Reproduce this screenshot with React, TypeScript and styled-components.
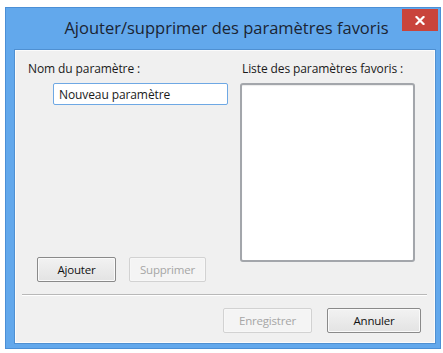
import React from "react";
import styled, { createGlobalStyle } from "styled-components";

const Global = createGlobalStyle`
  html, body { margin: 0; padding: 0; background: #ffffff; }
  body { font-family: "Open Sans", "Liberation Sans", sans-serif; }
  * { box-sizing: border-box; }
`;

const Page = styled.div`
  padding: 7px 0 0 5px;
`;

const Window = styled.div`
  width: 436px;
  height: 342px;
  background: #62a8ec;
  border: 1px solid #4b8fd6;
  display: flex;
  flex-direction: column;
  padding: 0 5px 5px 9px;
`;

const TitleBar = styled.div`
  height: 42px;
  display: flex;
  align-items: flex-start;
`;

const TitleSpacer = styled.div`
  width: 36px;
`;

const Title = styled.div`
  flex: 1;
  text-align: center;
  font-size: 16.5px;
  line-height: 22px;
  margin-top: 9px;
  color: #1b2433;
  white-space: nowrap;
`;

const CloseButton = styled.div`
  width: 36px;
  height: 22px;
  margin-top: 1px;
  margin-right: -3px;
  background: #c9443c;
  display: flex;
  align-items: center;
  justify-content: center;
`;

const Panel = styled.div`
  flex: 1;
  background: #f0f0f0;
  border: 1px solid #fbfbfb;
  box-shadow: 0 0 0 1px #4f90d2;
  padding: 0 7px 0 6px;
  display: flex;
  flex-direction: column;
`;

const Upper = styled.div`
  display: grid;
  grid-template-columns: 200px 175px;
  column-gap: 12px;
  padding: 10px 0 0 6px;
  height: 231px;
`;

const Column = styled.div`
  display: flex;
  flex-direction: column;
`;

const Label = styled.div<{ $indent?: number }>`
  font-size: 12px;
  line-height: 16px;
  color: #1a1a1a;
  letter-spacing: -0.1px;
  white-space: nowrap;
  padding-left: ${(p) => p.$indent ?? 0}px;
`;

const TextInput = styled.input`
  margin: 6px 0 0 25px;
  width: 175px;
  height: 22px;
  border: 1px solid #6ea8e4;
  border-radius: 2px;
  background: #ffffff;
  padding: 0 5px;
  font-family: "Open Sans", "Liberation Sans", sans-serif;
  font-size: 12px;
  color: #1a1a1a;
  letter-spacing: -0.1px;
  outline: none;
`;

const ListBox = styled.div`
  margin-top: 6px;
  width: 175px;
  height: 179px;
  background: #ffffff;
  border: 2px solid #a3a6ab;
  border-radius: 3px;
  box-shadow: inset 0 1px 1px rgba(0, 0, 0, 0.08);
`;

const ButtonRow = styled.div<{ $end?: boolean }>`
  display: flex;
  gap: ${(p) => (p.$end ? 15 : 13)}px;
  justify-content: ${(p) => (p.$end ? "flex-end" : "flex-start")};
  margin-top: auto;
  padding-left: ${(p) => (p.$end ? 0 : 9)}px;
  padding-right: ${(p) => (p.$end ? 6 : 0)}px;
`;

const Button = styled.button<{ $w: number }>`
  width: ${(p) => p.$w}px;
  height: 25px;
  border-radius: 2px;
  font-family: "Open Sans", "Liberation Sans", sans-serif;
  font-size: 11.5px;
  letter-spacing: -0.2px;
  padding: 0;
  border: 1px solid ${(p) => (p.disabled ? "#d2d2d2" : "#8a8a8a")};
  background: ${(p) =>
    p.disabled ? "#f4f4f4" : "linear-gradient(#f2f2f2, #e3e3e3)"};
  color: ${(p) => (p.disabled ? "#a6a6a6" : "#111111")};
  box-shadow: inset 0 0 0 1px ${(p) => (p.disabled ? "#f7f7f7" : "#fafafa")};
`;

const Separator = styled.div`
  margin-top: 12px;
  height: 2px;
  border-top: 1px solid #b8b8b8;
  border-bottom: 1px solid #ffffff;
`;

const Footer = styled.div`
  margin-top: 12px;
  display: flex;
`;

export default function App() {
  return (
    <>
      <Global />
      <Page>
        <Window>
          <TitleBar>
            <TitleSpacer />
            <Title>Ajouter/supprimer des paramètres favoris</Title>
            <CloseButton>
              <svg width="10" height="9" viewBox="0 0 10 9">
                <path
                  d="M1.5 1 L8.5 8 M8.5 1 L1.5 8"
                  stroke="#ffffff"
                  strokeWidth="2.2"
                  strokeLinecap="square"
                />
              </svg>
            </CloseButton>
          </TitleBar>
          <Panel>
            <Upper>
              <Column>
                <Label>Nom du paramètre :</Label>
                <TextInput defaultValue="Nouveau paramètre" />
                <ButtonRow>
                  <Button $w={79}>Ajouter</Button>
                  <Button $w={77} disabled>
                    Supprimer
                  </Button>
                </ButtonRow>
              </Column>
              <Column>
                <Label $indent={2}>Liste des paramètres favoris :</Label>
                <ListBox />
              </Column>
            </Upper>
            <Separator />
            <Footer>
              <ButtonRow $end style={{ flex: 1 }}>
                <Button $w={89} disabled>
                  Enregistrer
                </Button>
                <Button $w={94}>Annuler</Button>
              </ButtonRow>
            </Footer>
          </Panel>
        </Window>
      </Page>
    </>
  );
}
